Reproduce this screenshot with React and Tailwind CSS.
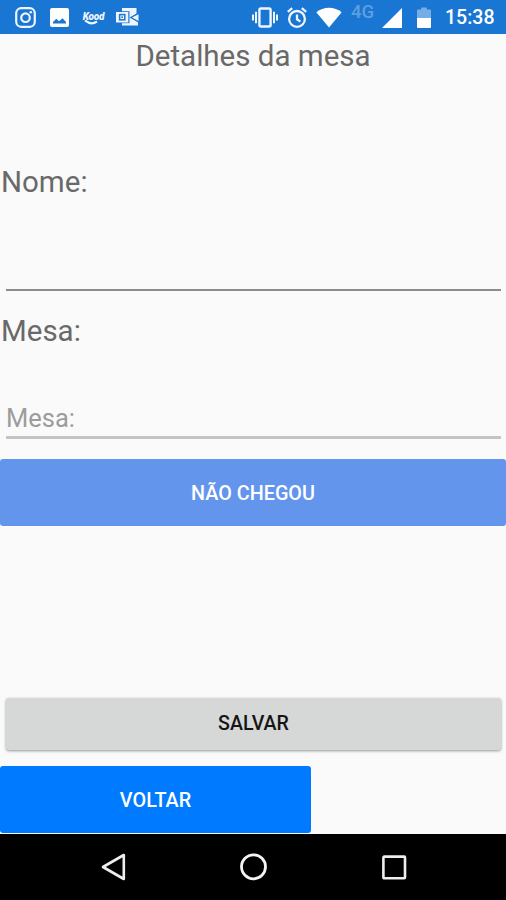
import React from 'react';

const InstagramIcon = () => (
  <svg className="h-[21px] w-[21px]" viewBox="0 0 21 21" fill="none" stroke="#eef5fd" strokeWidth="2.2">
    <rect x="1.2" y="1.2" width="18.6" height="18.6" rx="5" />
    <circle cx="10.5" cy="10.7" r="4.3" />
    <circle cx="15.8" cy="5.2" r="1.3" fill="#eef5fd" stroke="none" />
  </svg>
);

const PhotoIcon = () => (
  <svg className="ml-[14px] h-[19px] w-[19px]" viewBox="0 0 19 19">
    <rect width="19" height="19" rx="2" fill="#fff" />
    <path d="M3 15.5 V14 L6.3 10.8 L9 13.3 L12.5 10.3 L16 14 V15.5 Z" fill="#1976d2" />
  </svg>
);

const KoodIcon = () => (
  <div className="mt-[3px] ml-[13px] flex h-[14px] w-[23px] flex-col items-center">
    <span className="text-[10px] leading-[9px] font-black tracking-[-0.2px] text-[#eef5fd] italic">Kood</span>
    <svg className="-mt-px h-[5px] w-[23px]" viewBox="0 0 23 5" fill="none" stroke="#eef5fd" strokeWidth="2.2">
      <path d="M3 0.5 Q9 5.5 15 1.5" />
    </svg>
  </div>
);

const OutlookIcon = () => (
  <svg className="ml-[11px] h-[20px] w-[23px]" viewBox="0 0 23 20">
    <path d="M6 1 H20.5 V7 L14.5 10.5 L22 15 V18.5 H6 Z" fill="#eef5fd" />
    <path d="M13.5 10.6 L22.5 5.6 V15.6 Z" fill="#1976d2" />
    <path d="M16 10.6 L22.5 7.2 V14 Z" fill="#eef5fd" />
    <rect x="0" y="4.2" width="13.5" height="12" fill="#1976d2" />
    <rect x="0" y="5" width="12.3" height="10.5" fill="#eef5fd" />
    <rect x="3.6" y="7.6" width="5.2" height="5.2" fill="none" stroke="#1976d2" strokeWidth="1.5" />
    <rect x="5.4" y="9.4" width="1.6" height="1.6" fill="#1976d2" />
  </svg>
);

const VibrateIcon = () => (
  <svg className="h-[21px] w-[26px]" viewBox="0 0 26 21" fill="none" stroke="#eef5fd" strokeWidth="2">
    <rect x="7.4" y="1.5" width="11.2" height="18" rx="1.5" strokeWidth="2.4" />
    <path d="M4 4.8 V16.2 M1 7.5 V13.5 M22 4.8 V16.2 M25 7.5 V13.5" />
  </svg>
);

const AlarmIcon = () => (
  <svg className="ml-[9px] h-[21px] w-[20px]" viewBox="0 0 20 21" fill="none" stroke="#eef5fd" strokeWidth="2.3">
    <circle cx="10" cy="11.9" r="7.9" />
    <path d="M10 7.5 V12.3 L13.4 14.6" />
    <path d="M0.8 4.8 L5.2 1.2 M19.2 4.8 L14.8 1.2" />
  </svg>
);

const WifiIcon = () => (
  <svg className="ml-[9px] h-[21px] w-[26px]" viewBox="0 0 26 21" fill="#fff">
    <path d="M0.3 5.3 Q6 0.8 13 0.8 Q20 0.8 25.7 5.3 L13 20.5 Z" />
  </svg>
);

const SignalIcon = () => (
  <svg className="mt-[2px] ml-[6px] h-[20px] w-[20px]" viewBox="0 0 20 20" fill="#fff">
    <path d="M20 0 V20 H0 Z" />
  </svg>
);

const BatteryIcon = () => (
  <svg className="ml-[15px] h-[21px] w-[14px]" viewBox="0 0 14 21">
    <path d="M4.2 0.5 H9.8 V2.5 H13 Q14 2.5 14 3.5 V11 H0 V3.5 Q0 2.5 1 2.5 H4.2 Z" fill="#75ade4" />
    <path d="M0 11 H14 V20 Q14 21 13 21 H1 Q0 21 0 20 Z" fill="#fff" />
  </svg>
);

const StatusBar = () => (
  <div className="flex h-[34px] items-center justify-between bg-[#1976d2] pr-[11px] pl-[15px]">
    <div className="flex items-center">
      <InstagramIcon />
      <PhotoIcon />
      <KoodIcon />
      <OutlookIcon />
    </div>
    <div className="flex items-center">
      <VibrateIcon />
      <AlarmIcon />
      <WifiIcon />
      <span className="mb-[9px] ml-[9px] w-[25px] text-[18.5px] leading-none font-medium text-[#5e9fdf]">4G</span>
      <SignalIcon />
      <BatteryIcon />
      <span className="mt-[2px] ml-[14px] w-[50px] text-[19.5px] leading-none font-medium whitespace-nowrap text-white">15:38</span>
    </div>
  </div>
);

const NavigationBar = () => (
  <div className="flex h-[66px] items-center bg-black pl-[101px]">
    <svg className="h-7 w-[26px]" viewBox="0 0 26 28" fill="none" stroke="#eee" strokeWidth="2.6" strokeLinejoin="round">
      <path d="M2 14 L22.8 2 V26 Z" />
    </svg>
    <svg className="ml-[113px] h-7 w-7" viewBox="0 0 28 28" fill="none" stroke="#f4f4f4" strokeWidth="2.8">
      <circle cx="13.5" cy="13.8" r="12" />
    </svg>
    <svg className="ml-[114px] h-[25px] w-[25px]" viewBox="0 0 25 25" fill="none" stroke="#eee" strokeWidth="2.6">
      <rect x="1.4" y="1.6" width="21.6" height="21.6" rx="0.8" />
    </svg>
  </div>
);

export default function App() {
  return (
    <div className="flex h-[900px] w-[506px] flex-col overflow-hidden bg-[#fafafa] font-['Roboto',sans-serif]">
      <StatusBar />
      <main className="flex flex-1 flex-col text-[#696969]">
        <h1 className="h-[127px] pt-[4px] text-center text-[29.5px] leading-9">Detalhes da mesa</h1>

        <label className="pl-px text-[29.5px] leading-[42px]">Nome:</label>
        <div className="mr-[5px] ml-[6px] h-[88px] border-b-2 border-[#8c8c8c]" />

        <label className="mt-[19px] pl-px text-[29.5px] leading-[42px]">Mesa:</label>
        <div className="mr-[5px] ml-[6px] mt-[34px] h-[53px] border-b-[3px] border-[#c4c4c4] pt-[13px] text-[25.5px] leading-[38px] text-[#9c9c9c]">
          Mesa:
        </div>

        <button className="mt-[20px] h-[67px] rounded-[3px] bg-[#6495ed] pt-[2px] text-[19.8px] font-medium text-white">
          NÃO CHEGOU
        </button>
        <button className="mr-[5px] ml-[6px] mt-[172px] h-[52px] rounded-[3px] bg-[#d6d7d7] text-[19.6px] font-medium text-[#151515] shadow-[0_1px_3px_rgba(0,0,0,0.4)]">
          SALVAR
        </button>
        <button className="mt-[16px] h-[67px] w-[311px] rounded-[3px] bg-[#007bff] pt-[2px] text-[19.8px] font-medium text-white">
          VOLTAR
        </button>
      </main>
      <NavigationBar />
    </div>
  );
}
